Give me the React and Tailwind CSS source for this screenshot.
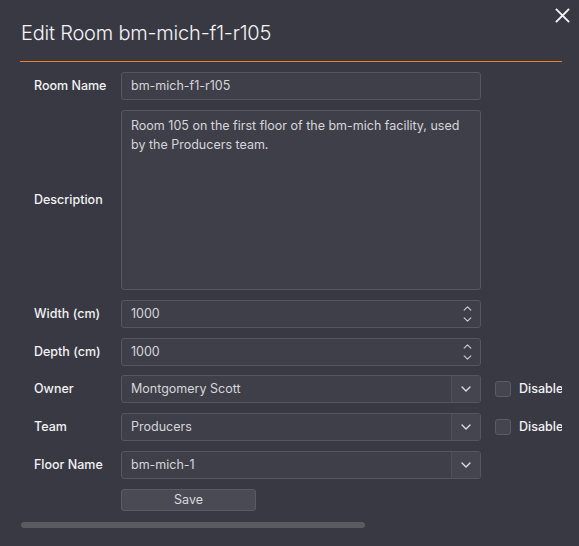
import React from 'react';

// Edit Room dialog — dark form with a horizontal scroll area
const Chevron = ({ up = false, className = '' }) => (
    <svg viewBox="0 0 10 6" className={className} fill="none" stroke="currentColor" strokeWidth="1.4" strokeLinecap="round" strokeLinejoin="round">
        <path d={up ? 'M1 5 L5 1 L9 5' : 'M1 1 L5 5 L9 1'} />
    </svg>
);

const Label = ({ children }) => (
    <div className="w-[101px] shrink-0 pl-[14px] whitespace-nowrap text-[12.5px] font-medium text-[#f2f2f4] leading-none">{children}</div>
);

const boxCls = 'w-[360px] shrink-0 bg-[#3f3f49] border border-[#565660] rounded-[3px] text-[12.5px] text-[#d6d6da]';

const TextRow = ({ label, value, spinner, className = '' }) => (
    <div className={`flex items-center ${className}`}>
        <Label>{label}</Label>
        <div className={`${boxCls} h-[28px] flex items-center pl-[9px] pr-[8px]`}>
            <span className="flex-1">{value}</span>
            {spinner && (
                <div className="flex flex-col items-center gap-[6px] text-[#c9c9ce]">
                    <Chevron up className="w-[9px] h-[5px]" />
                    <Chevron className="w-[9px] h-[5px]" />
                </div>
            )}
        </div>
    </div>
);

const SelectRow = ({ label, value, disable, className = '' }) => (
    <div className={`flex items-center ${className}`}>
        <Label>{label}</Label>
        <div className={`${boxCls} h-[28px] flex items-stretch`}>
            <span className="flex-1 flex items-center pl-[9px]">{value}</span>
            <span className="w-[29px] border-l border-[#50505a] bg-[#45454f] flex items-center justify-center text-[#dcdce2] rounded-r-[3px]">
                <Chevron className="w-[10px] h-[6px]" />
            </span>
        </div>
        {disable && (
            <div className="flex items-center ml-[14px] shrink-0">
                <span className="w-[16px] h-[16px] rounded-[3px] bg-[#45454f] border border-[#5c5c66]" />
                <span className="ml-[8px] text-[12.5px] font-medium text-[#f2f2f4]">Disabled</span>
            </div>
        )}
    </div>
);

export default function App() {
    return (
        <div className="w-[579px] h-[546px] bg-[#393943] relative overflow-hidden" style={{ fontFamily: 'Inter, "Noto Sans", sans-serif' }}>
            {/* Close */}
            <button className="absolute left-[555px] top-[8px] w-[15px] h-[15px] text-[#f4f4f6]">
                <svg viewBox="0 0 14 14" className="w-[15px] h-[15px]" stroke="currentColor" strokeWidth="1.8" strokeLinecap="square">
                    <path d="M1.5 1.5 L12.5 12.5 M12.5 1.5 L1.5 12.5" />
                </svg>
            </button>

            <div className="ml-[20px] w-[542px]">
                <h1 className="pt-[20px] pb-[15px] pl-[1px] text-[20px] tracking-[-0.01em] font-light text-[#f4f4f6] leading-[26px] border-b-[1.5px] border-[#ee7d2e]">
                    Edit Room bm-mich-f1-r105
                </h1>

                <div className="overflow-hidden w-[542px]">
                    <div className="w-[854px] pt-[10px]">
                        <TextRow label="Room Name" value="bm-mich-f1-r105" />

                        <div className="flex items-center mt-[10px]">
                            <Label>Description</Label>
                            <div className={`${boxCls} h-[180px] pl-[9px] pr-[8px] pt-[5px] leading-[19px]`}>
                                Room 105 on the first floor of the bm-mich facility, used by the Producers team.
                            </div>
                        </div>

                        <TextRow label="Width (cm)" value="1000" spinner className="mt-[10px]" />
                        <TextRow label="Depth (cm)" value="1000" spinner className="mt-[10px]" />
                        <SelectRow label="Owner" value="Montgomery Scott" disable className="mt-[9px]" />
                        <SelectRow label="Team" value="Producers" disable className="mt-[10px]" />
                        <SelectRow label="Floor Name" value="bm-mich-1" className="mt-[10px]" />

                        <div className="flex mt-[10px]">
                            <div className="w-[101px] shrink-0" />
                            <button className="w-[135px] h-[22px] bg-[#4a4a55] border border-[#5b5b65] rounded-[3px] text-[12.5px] text-[#dadade] leading-none">
                                Save
                            </button>
                        </div>
                    </div>
                </div>

                {/* horizontal scrollbar */}
                <div className="mt-[11px] ml-[1px] w-[344px] h-[6px] rounded-full bg-[#5a5a61]" />
            </div>
        </div>
    );
}
